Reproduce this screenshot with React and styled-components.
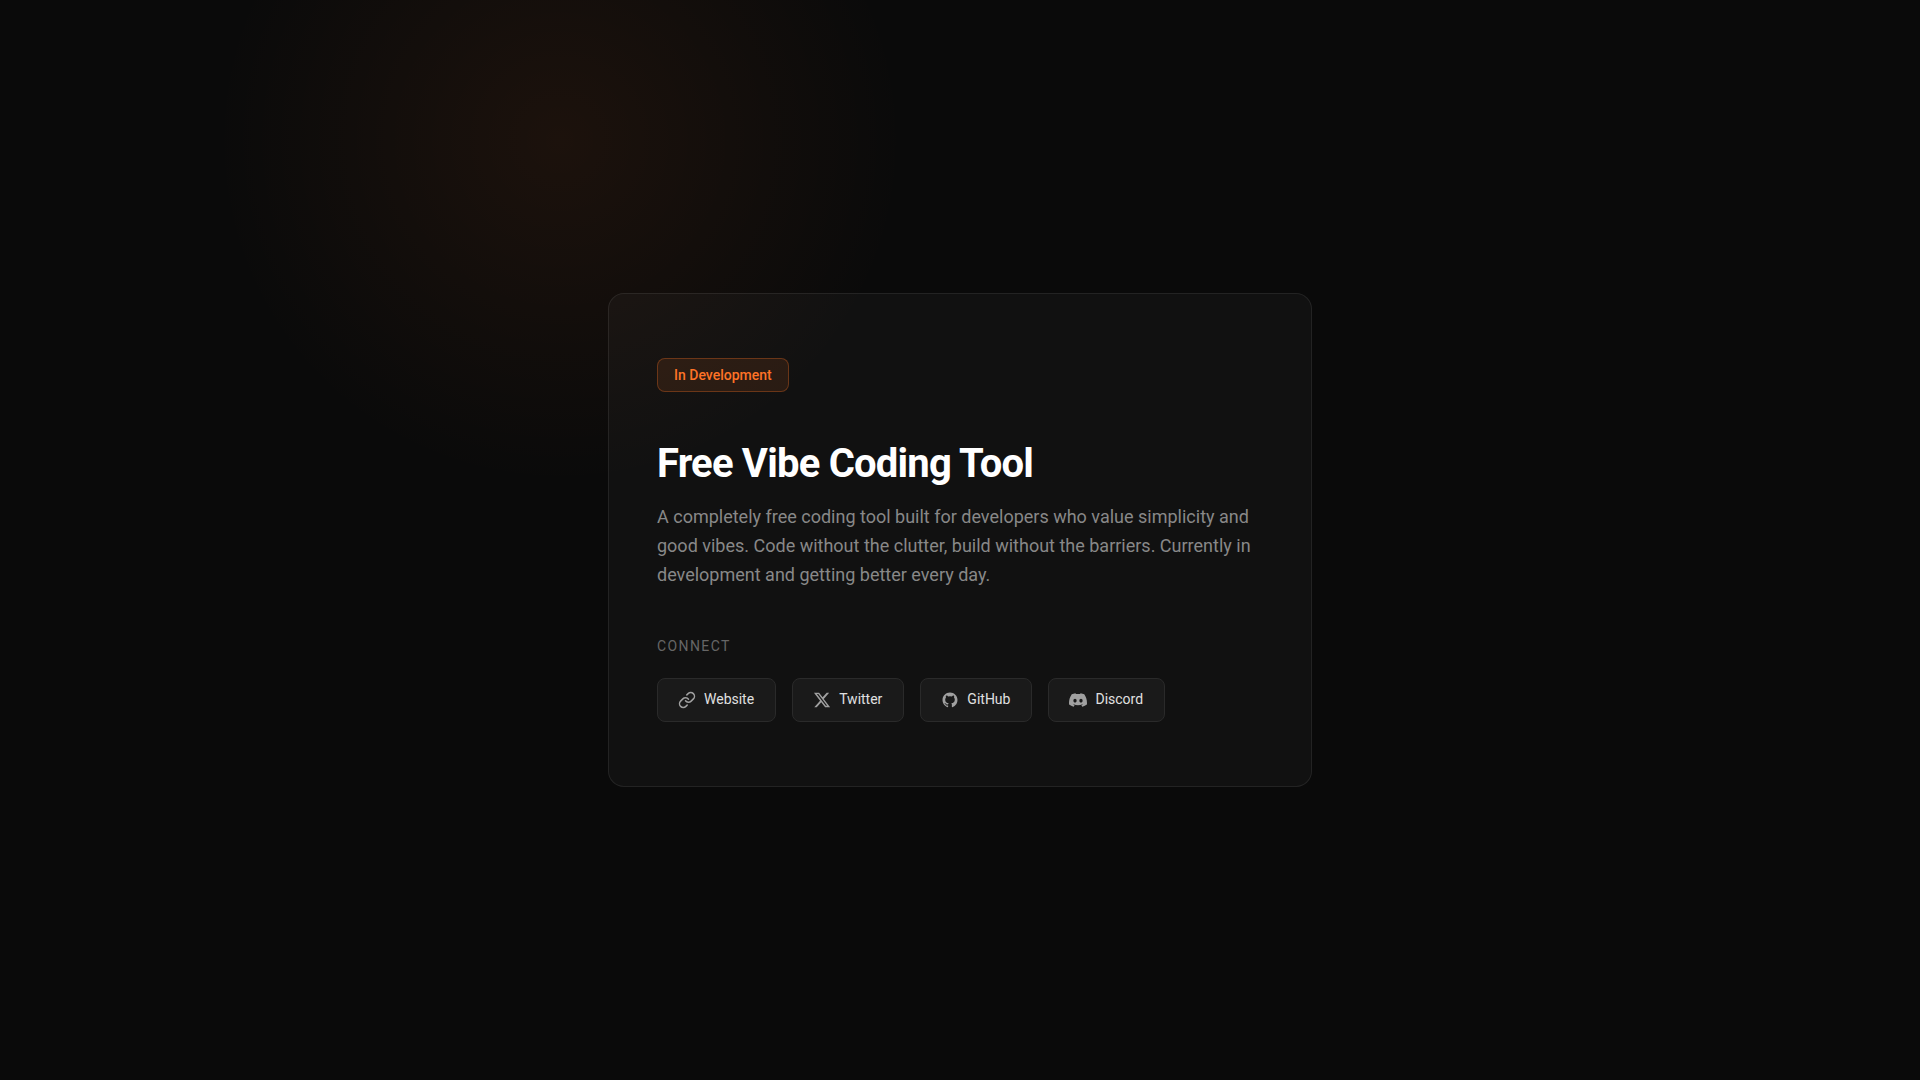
import React from "react";
import styled, { createGlobalStyle } from "styled-components";

const GlobalStyle = createGlobalStyle`
  *, *::before, *::after { box-sizing: border-box; }
  body {
    margin: 0;
    background: #0a0a0a;
    color: #ffffff;
    font-family: Roboto, "Liberation Sans", sans-serif;
  }
`;

const Page = styled.main`
  min-height: 100vh;
  display: flex;
  align-items: center;
  justify-content: center;
  padding: 48px;
  background: radial-gradient(
    circle 345px at 560px 140px,
    rgba(255, 115, 38, 0.075),
    rgba(255, 115, 38, 0)
  );
`;

const Card = styled.section`
  width: 100%;
  max-width: 704px;
  padding: 64px 48px;
  background: rgba(255, 255, 255, 0.03);
  border: 1px solid rgba(255, 255, 255, 0.08);
  border-radius: 16px;
`;

const Badge = styled.span`
  display: block;
  width: fit-content;
  margin-bottom: 50px;
  padding: 8px 16px;
  background: rgba(255, 115, 38, 0.1);
  border: 1px solid rgba(255, 115, 38, 0.3);
  border-radius: 8px;
  color: #ff7326;
  font-size: 14px;
  font-weight: 500;
  line-height: 16px;
`;

const Title = styled.h1`
  margin: 0 0 16px;
  font-size: 40px;
  font-weight: 700;
  line-height: 44px;
  letter-spacing: -0.02em;
`;

const Description = styled.p`
  margin: 0 0 49px;
  color: #888888;
  font-size: 18px;
  line-height: 29px;
`;

const Label = styled.h2`
  margin: 0 0 24px;
  color: #666666;
  font-size: 14px;
  font-weight: 400;
  line-height: 16px;
  letter-spacing: 0.1em;
  text-transform: uppercase;
`;

const Links = styled.nav`
  display: flex;
  flex-wrap: wrap;
  gap: 16px;
`;

const LinkButton = styled.a`
  display: flex;
  align-items: flex-start;
  gap: 8px;
  padding: 12px 21px 12px 20px;
  background: #1a1a1a;
  border: 1px solid #2a2a2a;
  border-radius: 8px;
  color: #e0e0e0;
  font-size: 14px;
  line-height: 16px;
  text-decoration: none;

  &:hover { background: #222222; }
`;

const Icon = styled.svg`
  width: 18px;
  height: 18px;
  flex: none;
  color: #a0a0a0;
`;

const LinkIcon = () => (
  <Icon viewBox="0 0 24 24" fill="none" stroke="currentColor" strokeWidth="2" strokeLinecap="round" strokeLinejoin="round" aria-hidden="true">
    <path d="M10 13a5 5 0 0 0 7.54.54l3-3a5 5 0 0 0-7.07-7.07l-1.72 1.71" />
    <path d="M14 11a5 5 0 0 0-7.54-.54l-3 3a5 5 0 0 0 7.07 7.07l1.71-1.71" />
  </Icon>
);

const XIcon = () => (
  <Icon viewBox="0 0 24 24" fill="currentColor" aria-hidden="true">
    <path d="M18.244 2.25h3.308l-7.227 8.26 8.502 11.24H16.17l-5.214-6.817L4.99 21.75H1.68l7.73-8.835L1.254 2.25H8.08l4.713 6.231zm-1.161 17.52h1.833L7.084 4.126H5.117z" />
  </Icon>
);

const GitHubIcon = () => (
  <Icon viewBox="0 0 24 24" fill="currentColor" aria-hidden="true">
    <path d="M12 2C6.477 2 2 6.484 2 12.017c0 4.425 2.865 8.18 6.839 9.504.5.092.682-.217.682-.483 0-.237-.008-.868-.013-1.703-2.782.605-3.369-1.343-3.369-1.343-.454-1.158-1.11-1.466-1.11-1.466-.908-.62.069-.608.069-.608 1.003.07 1.531 1.032 1.531 1.032.892 1.53 2.341 1.088 2.91.832.092-.647.35-1.088.636-1.338-2.22-.253-4.555-1.113-4.555-4.951 0-1.093.39-1.988 1.029-2.688-.103-.253-.446-1.272.098-2.65 0 0 .84-.27 2.75 1.026A9.564 9.564 0 0 1 12 6.844a9.59 9.59 0 0 1 2.504.337c1.909-1.296 2.747-1.027 2.747-1.027.546 1.379.202 2.398.1 2.651.64.7 1.028 1.595 1.028 2.688 0 3.848-2.339 4.695-4.566 4.943.359.309.678.92.678 1.855 0 1.338-.012 2.419-.012 2.747 0 .268.18.58.688.482A10.02 10.02 0 0 0 22 12.017C22 6.484 17.522 2 12 2z" />
  </Icon>
);

const DiscordIcon = () => (
  <Icon viewBox="0 0 24 24" fill="currentColor" aria-hidden="true">
    <path d="M20.317 4.37a19.791 19.791 0 0 0-4.885-1.515.074.074 0 0 0-.079.037c-.21.375-.444.864-.608 1.25a18.27 18.27 0 0 0-5.487 0 12.64 12.64 0 0 0-.617-1.25.077.077 0 0 0-.079-.037A19.736 19.736 0 0 0 3.677 4.37a.07.07 0 0 0-.032.027C.533 9.046-.32 13.58.099 18.057a.082.082 0 0 0 .031.057 19.9 19.9 0 0 0 5.993 3.03.078.078 0 0 0 .084-.028 14.09 14.09 0 0 0 1.226-1.994.076.076 0 0 0-.041-.106 13.107 13.107 0 0 1-1.872-.892.077.077 0 0 1-.008-.128 10.2 10.2 0 0 0 .372-.292.074.074 0 0 1 .077-.01c3.928 1.793 8.18 1.793 12.062 0a.074.074 0 0 1 .078.01c.12.098.246.198.373.292a.077.077 0 0 1-.006.127 12.299 12.299 0 0 1-1.873.892.077.077 0 0 0-.041.107c.36.698.772 1.362 1.225 1.993a.076.076 0 0 0 .084.028 19.839 19.839 0 0 0 6.002-3.03.077.077 0 0 0 .032-.054c.5-5.177-.838-9.674-3.549-13.66a.061.061 0 0 0-.031-.03zM8.02 15.33c-1.183 0-2.157-1.085-2.157-2.419 0-1.333.956-2.419 2.157-2.419 1.21 0 2.176 1.096 2.157 2.42 0 1.333-.956 2.418-2.157 2.418zm7.975 0c-1.183 0-2.157-1.085-2.157-2.419 0-1.333.955-2.419 2.157-2.419 1.21 0 2.176 1.096 2.157 2.42 0 1.333-.946 2.418-2.157 2.418z" />
  </Icon>
);

const socialLinks = [
  { name: "Website", icon: LinkIcon },
  { name: "Twitter", icon: XIcon },
  { name: "GitHub", icon: GitHubIcon },
  { name: "Discord", icon: DiscordIcon },
];

export default function App() {
  return (
    <>
      <GlobalStyle />
      <Page>
        <Card>
          <Badge>In Development</Badge>
          <Title>Free Vibe Coding Tool</Title>
          <Description>
            A completely free coding tool built for developers who value simplicity and good vibes. Code without the
            clutter, build without the barriers. Currently in development and getting better every day.
          </Description>
          <Label id="connect">Connect</Label>
          <Links aria-labelledby="connect">
            {socialLinks.map(({ name, icon: Glyph }) => (
              <LinkButton key={name} href="#">
                <Glyph />
                {name}
              </LinkButton>
            ))}
          </Links>
        </Card>
      </Page>
    </>
  );
}
